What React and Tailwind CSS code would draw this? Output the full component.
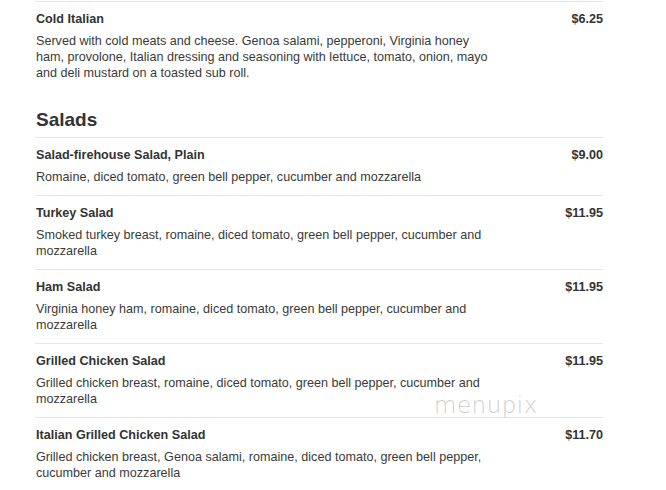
const salads = [
  {
    name: 'Salad-firehouse Salad, Plain',
    price: '$9.00',
    desc: 'Romaine, diced tomato, green bell pepper, cucumber and mozzarella',
  },
  {
    name: 'Turkey Salad',
    price: '$11.95',
    desc: 'Smoked turkey breast, romaine, diced tomato, green bell pepper, cucumber and mozzarella',
  },
  {
    name: 'Ham Salad',
    price: '$11.95',
    desc: 'Virginia honey ham, romaine, diced tomato, green bell pepper, cucumber and mozzarella',
  },
  {
    name: 'Grilled Chicken Salad',
    price: '$11.95',
    desc: 'Grilled chicken breast, romaine, diced tomato, green bell pepper, cucumber and mozzarella',
  },
  {
    name: 'Italian Grilled Chicken Salad',
    price: '$11.70',
    desc: 'Grilled chicken breast, Genoa salami, romaine, diced tomato, green bell pepper, cucumber and mozzarella',
  },
];

const MenuItem = ({ name, price, desc }) => (
  <div className="border-t border-[#e6e6e6] pt-[9px] pb-[10px]">
    <div className="flex justify-between pl-px">
      <h3 className="text-[12.6px] leading-4 font-bold text-[#333]">{name}</h3>
      <span className="text-[12.6px] leading-4 font-bold text-[#333]">{price}</span>
    </div>
    <p className="mt-[6px] pl-px w-[458px] text-[12.6px] leading-4 text-[#3a3a3a]">{desc}</p>
  </div>
);

export default function App() {
  return (
    <div className="min-h-screen bg-white pt-px font-['Liberation_Sans',Arial,sans-serif]">
      <div className="relative ml-[35px] w-[568px]">
        <MenuItem
          name="Cold Italian"
          price="$6.25"
          desc="Served with cold meats and cheese. Genoa salami, pepperoni, Virginia honey ham, provolone, Italian dressing and seasoning with lettuce, tomato, onion, mayo and deli mustard on a toasted sub roll."
        />

        {/* Salads */}
        <h2 className="mt-[17px] mb-[5px] pl-px text-[19px] leading-6 font-bold text-[#333]">Salads</h2>
        {salads.map((item) => (
          <MenuItem key={item.name} {...item} />
        ))}

        {/* watermark */}
        <span className="pointer-events-none absolute left-[399px] top-[393px] text-[23px] leading-none tracking-[0.5px] text-[#cfcfcf] font-['DejaVu_Sans',sans-serif] font-extralight">
          menupix
        </span>
      </div>
    </div>
  );
}
